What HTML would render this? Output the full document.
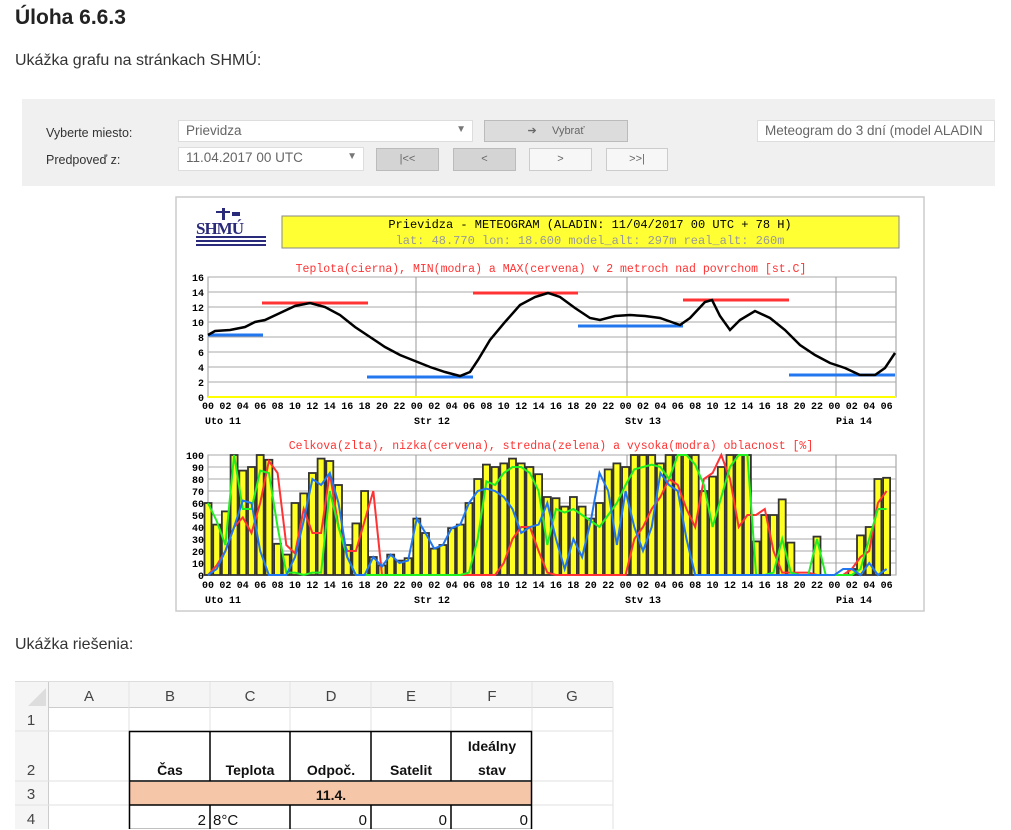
<!DOCTYPE html><html><head><meta charset="utf-8"><style>
body{margin:0;width:1011px;height:829px;overflow:hidden;background:#fff;font-family:"Liberation Sans",sans-serif;color:#222;position:relative}
.a{position:absolute}
h1{position:absolute;left:15px;top:6px;margin:0;font-size:21px;font-weight:bold;color:#222}
.p{font-size:16px;color:#333}
.panel{left:22px;top:99px;width:973px;height:87px;background:#f0f0f0}
.lbl{font-size:12.5px;color:#333}
.sel{background:#fff;border:1px solid #ddd;font-size:13.5px;color:#666;box-sizing:border-box;padding:2px 7px}
.btn{border:1px solid #bbb;box-sizing:border-box;font-size:11px;color:#666;text-align:center;line-height:20px}
</style></head><body>
<h1>Úloha 6.6.3</h1>
<div class="a p" style="left:15px;top:52px">Ukážka grafu na stránkach SHMÚ:</div>
<div class="a panel"></div>
<div class="a lbl" style="left:46px;top:126px">Vyberte miesto:</div>
<div class="a lbl" style="left:46px;top:153px">Predpoveď z:</div>
<div class="a sel" style="left:178px;top:120px;width:295px;height:22px">Prievidza<span style="position:absolute;right:6px;top:3px;font-size:10px;color:#777">▼</span></div>
<div class="a btn" style="left:484px;top:120px;width:144px;height:22px;background:#dcdcdc">➔ &nbsp; &nbsp; Vybrať</div>
<div class="a sel" style="left:757px;top:120px;width:238px;height:22px;white-space:nowrap;overflow:hidden">Meteogram do 3 dní (model ALADIN</div>
<div class="a sel" style="left:178px;top:147px;width:186px;height:24px">11.04.2017 00 UTC<span style="position:absolute;right:6px;top:3px;font-size:10px;color:#777">▼</span></div>
<div class="a btn" style="left:376px;top:148px;width:63px;height:23px;background:#d4d4d4">|&lt;&lt;</div>
<div class="a btn" style="left:453px;top:148px;width:63px;height:23px;background:#d4d4d4">&lt;</div>
<div class="a btn" style="left:529px;top:148px;width:63px;height:23px;background:#f7f7f7;border-color:#ccc">&gt;</div>
<div class="a btn" style="left:606px;top:148px;width:62px;height:23px;background:#f7f7f7;border-color:#ccc">&gt;&gt;|</div>

<svg class="a" style="left:0;top:0" width="1011" height="640" id="sv" font-family="Liberation Mono, monospace">
<rect x="176" y="197" width="748" height="414" fill="#fff" stroke="#ccc" stroke-width="1.5"/>
<g fill="#2a2a7a">
<rect x="222" y="208" width="3" height="12"/><rect x="216" y="211" width="14" height="2"/><rect x="232" y="212" width="8" height="4"/>
<text x="196" y="234" font-family="Liberation Serif,serif" font-weight="bold" font-size="17" letter-spacing="-1">SHMÚ</text>
<rect x="196" y="236" width="70" height="2"/><rect x="196" y="240" width="70" height="2"/><rect x="196" y="244" width="70" height="2"/></g>
<rect x="282" y="216" width="617" height="32" fill="#ffff33" stroke="#888"/>
<text x="590" y="228" font-size="12" fill="#000" text-anchor="middle">Prievidza - METEOGRAM (ALADIN: 11/04/2017 00 UTC + 78 H)</text>
<text x="590" y="244" font-size="12" fill="#999" text-anchor="middle">lat: 48.770  lon: 18.600  model_alt: 297m  real_alt: 260m</text>
<text x="551" y="272" font-size="11.5" fill="#f33" text-anchor="middle">Teplota(cierna), MIN(modra) a MAX(cervena) v 2 metroch nad povrchom [st.C]</text>
<text x="551" y="449" font-size="11.5" fill="#f33" text-anchor="middle">Celkova(zlta), nizka(cervena), stredna(zelena) a vysoka(modra) oblacnost [%]</text>
<g id="g1"></g>
</svg>

<div class="a p" style="left:15px;top:636px">Ukážka riešenia:</div>
<div class="a" style="left:15px;top:681px;width:598px;height:148px;background:#fff;border-top:1px solid #ddd"></div>
<div class="a" style="left:15px;top:682px;width:598px;height:25px;background:#f5f5f5;border-bottom:1px solid #ccc"></div>
<div class="a" style="left:15px;top:682px;width:33px;height:147px;background:#f5f5f5;border-right:1px solid #ccc"></div>
<svg class="a" style="left:0;top:0" width="1011" height="829" font-family="Liberation Sans, sans-serif">
<polygon points="28,706 46,706 46,688" fill="#ddd"/>
<g stroke="#e2e2e2"><line x1="129" y1="682" x2="129" y2="829"/><line x1="210" y1="682" x2="210" y2="829"/><line x1="290" y1="682" x2="290" y2="829"/><line x1="371" y1="682" x2="371" y2="829"/><line x1="451" y1="682" x2="451" y2="829"/><line x1="532" y1="682" x2="532" y2="829"/><line x1="613" y1="682" x2="613" y2="829"/>
<line x1="15" y1="731" x2="613" y2="731"/><line x1="15" y1="781" x2="613" y2="781"/><line x1="15" y1="805" x2="613" y2="805"/></g>
<g font-size="15" fill="#444" text-anchor="middle"><text x="89" y="701">A</text><text x="170" y="701">B</text><text x="250" y="701">C</text><text x="331" y="701">D</text><text x="411" y="701">E</text><text x="492" y="701">F</text><text x="572" y="701">G</text>
<text x="31" y="725">1</text><text x="31" y="775">2</text><text x="31" y="799">3</text><text x="31" y="824">4</text></g>
<rect x="130" y="782" width="402" height="23" fill="#f5c6a8"/>
<g stroke="#000" stroke-width="1.5" fill="none"><rect x="129.5" y="731.5" width="402" height="98"/><line x1="129" y1="781" x2="532" y2="781"/><line x1="129" y1="805" x2="532" y2="805"/>
<line x1="210" y1="731" x2="210" y2="781"/><line x1="290" y1="731" x2="290" y2="781"/><line x1="371" y1="731" x2="371" y2="781"/><line x1="451" y1="731" x2="451" y2="781"/>
<line x1="210" y1="805" x2="210" y2="829"/><line x1="290" y1="805" x2="290" y2="829"/><line x1="371" y1="805" x2="371" y2="829"/><line x1="451" y1="805" x2="451" y2="829"/></g>
<g font-size="14" font-weight="bold" fill="#111" text-anchor="middle"><text x="170" y="775">Čas</text><text x="250" y="775">Teplota</text><text x="331" y="775">Odpoč.</text><text x="411" y="775">Satelit</text><text x="492" y="751">Ideálny</text><text x="492" y="775">stav</text><text x="331" y="800">11.4.</text></g>
<g font-size="15" fill="#111"><text x="206" y="825" text-anchor="end">2</text><text x="213" y="825">8°C</text><text x="367" y="825" text-anchor="end">0</text><text x="447" y="825" text-anchor="end">0</text><text x="528" y="825" text-anchor="end">0</text></g>
</svg>
<script>
var g=document.getElementById('g1'),s='';
var X0=208,H=8.7;function hx(h){return X0+h*H}
function grid(top,bot,n,labs,ly){
 s+='<rect x="208" y="'+top+'" width="688" height="'+(bot-top)+'" fill="none" stroke="#999"/>';
 for(var i=0;i<=n;i++){var y=bot-(bot-top)*i/n;s+='<line x1="208" x2="896" y1="'+y+'" y2="'+y+'" stroke="#aaa"/>';
 s+='<text x="204" y="'+(y+4)+'" font-size="10" font-weight="bold" text-anchor="end" fill="#000">'+labs[i]+'</text>';}
 [416,627,836].forEach(function(x){s+='<line x1="'+x+'" x2="'+x+'" y1="'+top+'" y2="'+bot+'" stroke="#999"/>'});
 for(var h=0;h<=78;h+=2){var hh=('0'+(h%24)).slice(-2);s+='<text x="'+hx(h)+'" y="'+ly+'" font-size="10" font-weight="bold" text-anchor="middle" fill="#000">'+hh+'</text>';}
 var d=['Uto 11','Str 12','Stv 13','Pia 14'];[205,414,625,836].forEach(function(x,i){s+='<text x="'+x+'" y="'+(ly+15)+'" font-size="10" font-weight="bold" fill="#000">'+d[i]+'</text>'});
}
grid(277,397,8,['0','2','4','6','8','10','12','14','16'],409);
s+='<line x1="208" x2="896" y1="397" y2="397" stroke="#ff0" stroke-width="2"/>';
[[262,368,303,'#f33'],[473,578,293,'#f33'],[683,789,300,'#f33'],[208,263,335,'#27e'],[367,473,377,'#27e'],[578,683,326,'#27e'],[789,895,375,'#27e']].forEach(function(l){s+='<line x1="'+l[0]+'" x2="'+l[1]+'" y1="'+l[2]+'" y2="'+l[2]+'" stroke="'+l[3]+'" stroke-width="3"/>'});
s+='<polyline fill="none" stroke="#000" stroke-width="2.5" points="208,335 215,331 230,330 245,327 255,322 265,320 280,313 295,306 310,303 325,307 340,315 355,327 370,337 385,347 400,355 415,361 430,367 445,372 460,376 470,372 478,360 490,340 505,322 520,305 535,297 548,293 560,297 575,308 590,318 600,320 615,316 630,315 645,316 660,318 680,325 690,318 705,302 712,300 720,316 730,330 740,320 755,311 770,318 785,330 800,345 815,355 830,363 845,368 860,375 875,375 885,368 895,353"/>';
grid(455,575,10,['0','10','20','30','40','50','60','70','80','90','100'],588);
var T=[60,42,53,100,87,90,100,96,26,17,60,68,85,97,95,75,25,43,70,15,8,17,12,14,47,35,22,25,39,42,60,80,92,90,93,97,93,90,84,65,64,57,65,57,47,60,88,93,90,100,100,100,93,100,100,100,100,70,82,90,100,100,100,28,50,50,63,27,0,0,32,0,0,0,5,33,40,80,81];
var G=[60,45,25,100,55,55,87,85,40,2,2,0,2,2,70,40,15,0,0,0,0,0,0,0,0,0,0,0,0,0,2,30,78,75,85,90,90,85,70,25,55,52,55,50,45,40,50,60,75,88,90,92,90,80,100,100,92,75,40,65,90,100,100,0,0,2,30,2,0,0,30,0,0,0,0,5,30,55,55];
var R=[0,8,20,40,48,35,60,95,85,25,18,55,35,35,85,40,20,20,45,70,0,0,0,0,0,0,0,0,0,0,0,0,0,0,10,30,40,40,20,2,0,0,0,0,0,0,0,0,0,30,40,55,65,80,75,55,40,80,85,100,80,40,50,50,55,20,2,2,2,2,0,0,0,0,5,15,20,60,70];
var B=[0,5,20,40,62,60,20,0,0,0,15,45,80,75,85,60,15,0,0,15,7,17,10,12,47,35,22,25,39,42,60,70,72,70,65,55,35,40,42,60,30,5,30,15,45,85,70,25,70,40,20,40,85,75,70,30,0,0,0,0,0,0,0,0,0,0,0,0,0,0,0,0,0,5,5,0,10,0,5];
T.forEach(function(v,h){if(v>0){var y=575-v*1.2;s+='<rect x="'+(hx(h)-3.5)+'" y="'+y+'" width="7" height="'+(575-y)+'" fill="#ff2" stroke="#333" stroke-width="1.8"/>';}});
function pl(a,c){s+='<polyline fill="none" stroke="'+c+'" stroke-width="2" points="'+a.map(function(v,h){return hx(h)+','+(575-v*1.2)}).join(' ')+'"/>';}
pl(R,'#f33');pl(G,'#2e2');pl(B,'#27e');
g.innerHTML=s;
</script>
</body></html>
